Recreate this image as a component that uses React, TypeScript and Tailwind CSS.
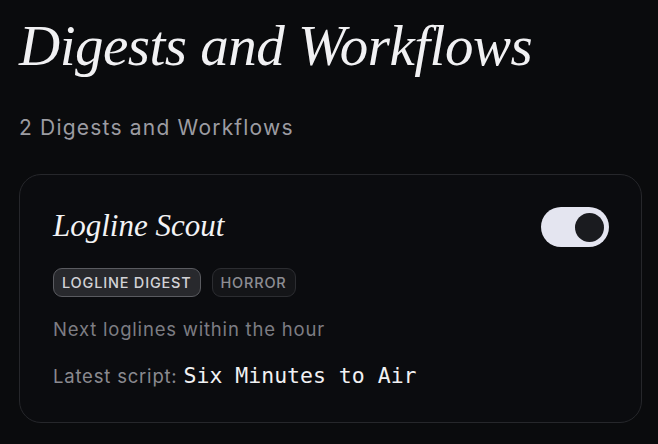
import { useState } from "react";

const serif = { fontFamily: '"Liberation Serif", "DejaVu Serif", serif' };

export default function App() {
  const [enabled, setEnabled] = useState(true);

  return (
    <div className="min-h-screen w-full bg-[#0a0b0d] px-[19px] pt-[14px] pb-6 font-['Inter','Noto_Sans',sans-serif]">
      {/* Header */}
      <h1 className="text-[57px] leading-[64px] italic text-[#f1f1f3] tracking-[-0.5px]" style={serif}>
        Digests and Workflows
      </h1>
      <p className="mt-[36px] text-[21px] leading-[28px] tracking-[1.2px] text-[#9c9ca2]">2 Digests and Workflows</p>

      {/* Workflow card */}
      <div className="mt-[32px] w-[623px] rounded-[22px] border border-[#26272b] bg-[#0b0c0f] pl-[33px] pr-[32px] pt-[32px] pb-[33px]">
        <div className="flex items-start justify-between">
          <h2 className="mt-[1px] text-[31px] leading-[36px] italic text-[#f3f3f5]" style={serif}>
            Logline Scout
          </h2>
          <button
            onClick={() => setEnabled(!enabled)}
            className="flex h-[40px] w-[68px] items-center rounded-full bg-[#e4e5f0] px-[5px]"
          >
            <span className={`h-[29px] w-[29px] rounded-full bg-[#1a1b1f] ${enabled ? "ml-auto" : ""}`} />
          </button>
        </div>

        <div className="mt-[21px] flex gap-[11px]">
          <span className="rounded-[9px] border border-[#5a5b60] bg-[#28292d] px-[8px] py-[4.5px] text-[14.5px] leading-[18px] font-medium tracking-[0.8px] text-[#d2d2d6]">
            LOGLINE DIGEST
          </span>
          <span className="rounded-[9px] border border-[#2c2d31] bg-[#141518] px-[8px] py-[4.5px] text-[14.5px] leading-[18px] font-medium tracking-[0.8px] text-[#8d8d93]">
            HORROR
          </span>
        </div>

        <p className="mt-[20px] text-[18.5px] leading-[24px] tracking-[0.8px] text-[#7d7d83]">Next loglines within the hour</p>
        <p className="mt-[22px] text-[18.5px] leading-[26px] tracking-[0.8px] text-[#8a8a90]">
          Latest script:{" "}
          <span className="text-[21.5px] tracking-normal text-[#f1f1f3] font-['DejaVu_Sans_Mono','Liberation_Mono',monospace]">
            Six Minutes to Air
          </span>
        </p>
      </div>
    </div>
  );
}
